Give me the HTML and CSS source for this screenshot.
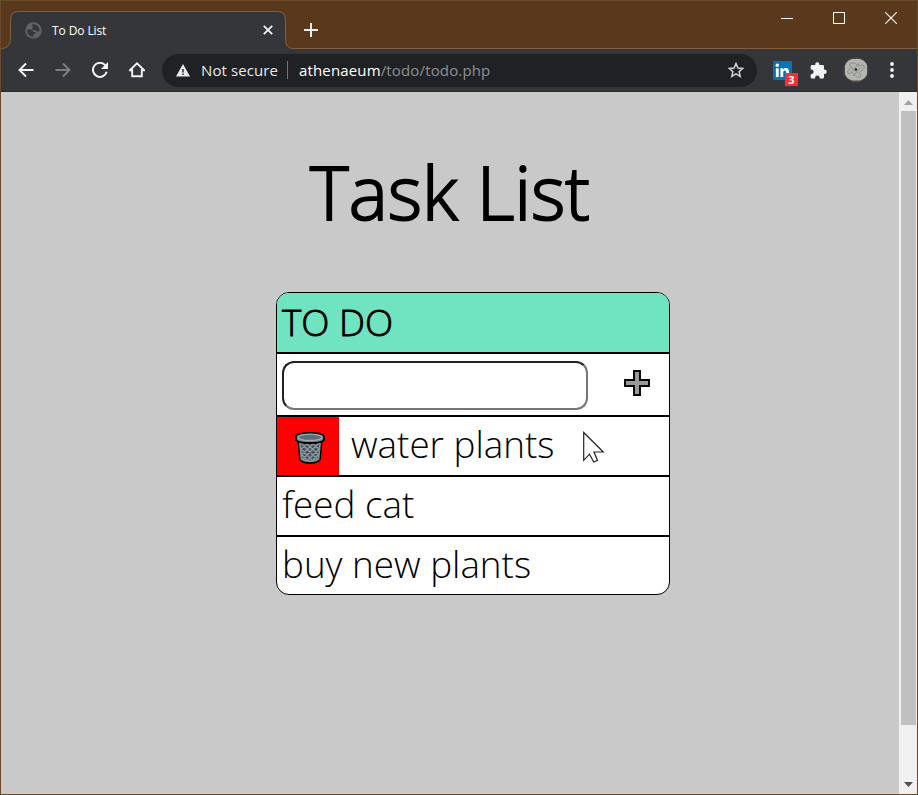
FILE: index.html
```
<!DOCTYPE html>
<html lang="en">
<head>
<meta charset="utf-8">
<title>To Do List</title>
<link rel="stylesheet" href="styles.css">
</head>
<body>
<div class="window">
  <header class="titlebar">
    <div class="tab">
      <svg class="tab-shape" width="292" height="40" viewBox="0 0 292 40"><path d="M0 39.500C6 39.500 9.500 36 9.500 29.500V10.500Q9.500 2.500 17.500 2.500H276.500Q284.500 2.500 284.500 10.500V30Q284.500 39.500 292 39.500V40H0Z" fill="#35363a"/><path d="M0 39.500C6 39.500 9.500 36 9.500 29.500V10.500Q9.500 2.500 17.500 2.500H276.500Q284.500 2.500 284.500 10.500V30Q284.500 39.500 292 39.500" fill="none" stroke="#80613f"/></svg>
      <svg class="globe" width="17" height="17" viewBox="0 0 17 17"><circle cx="8.500" cy="8.500" r="8.300" fill="#5f6368"/><path d="M2.200 7.500 5 7.600Q8 7.700 8.200 10H10.500V12H8.500V14.800A6.300 6.300 0 0 1 2.200 7.500ZM7.300 2.300A6.400 6.400 0 0 1 14.700 9L12.500 9.800 11 8.300 8 8 6.600 6.500 8.300 5.500 7.300 4Z" fill="#35363a"/></svg>
      <span class="tab-title">To Do List</span>
      <svg class="tab-close" width="10" height="10" viewBox="0 0 10 10"><path d="M.8.8 9.200 9.200M9.200.8.8 9.200" stroke="#f1f3f4" stroke-width="1.800"/></svg>
    </div>
    <svg class="new-tab" width="14" height="14" viewBox="0 0 14 14"><path d="M7 0V14M0 7H14" stroke="#e8eaed" stroke-width="2"/></svg>
    <div class="controls">
      <svg width="12" height="12" viewBox="0 0 12 12"><path d="M0 6.500H12" stroke="#fff"/></svg>
      <svg width="12" height="12" viewBox="0 0 12 12"><path d="M.5.5H11.500V11.500H.5Z" fill="none" stroke="#fff"/></svg>
      <svg width="12" height="12" viewBox="0 0 12 12"><path d="M.3.3 11.700 11.700M11.700.3.3 11.700" stroke="#fff" stroke-width="1.100"/></svg>
    </div>
  </header>
  <nav class="toolbar">
    <svg class="nav-icon" width="16" height="16" viewBox="0 0 16 16"><path d="M15.500 8H2M8 1.500 1.500 8 8 14.500" fill="none" stroke="#f1f3f4" stroke-width="1.900"/></svg>
    <svg class="nav-icon" width="16" height="16" viewBox="0 0 16 16"><path d="M.5 8H14M8 1.500 14.500 8 8 14.500" fill="none" stroke="#7d7e82" stroke-width="1.900"/></svg>
    <svg class="nav-icon" width="16" height="16" viewBox="0 0 16 16"><path d="M13.300 3.300A7 7 0 1 0 14.700 9.800" fill="none" stroke="#f1f3f4" stroke-width="2"/><path d="M16 0V7H9Z" fill="#f1f3f4"/></svg>
    <svg class="nav-icon" width="16" height="16" viewBox="0 0 16 16"><path d="M.8 8.300H3.200V14.200H12.800V8.300H15.200L8 1.400Z" fill="none" stroke="#f1f3f4" stroke-width="1.900"/></svg>
    <div class="omnibox">
      <svg class="warn" width="14" height="13" viewBox="0 0 14 13"><path d="M7 0 14 12.500H0Z" fill="#e8eaed"/><path d="M7 5V8.400M7 9.600V11" stroke="#202124" stroke-width="1.400"/></svg>
      <span class="secure">Not secure</span>
      <span class="divider"></span>
      <span class="url"><span class="host">athenaeum</span>/todo/todo.php</span>
      <svg class="star" width="16" height="16" viewBox="0 0 16 16"><path d="M8 1.500 9.900 6 14.800 6.400 11.100 9.600 12.200 14.400 8 11.800 3.800 14.400 4.900 9.600 1.200 6.400 6.100 6Z" fill="none" stroke="#d0d2d5" stroke-width="1.500"/></svg>
    </div>
    <div class="linkedin">
      <svg width="19" height="19" viewBox="0 0 19 19"><rect width="19" height="19" rx="1.200" fill="#0277b5"/><circle cx="4.300" cy="4.300" r="1.700" fill="#fff"/><path d="M2.900 7.200H5.700V16H2.900ZM7.400 7.200H10.100V8.400Q11 7 12.900 7 16 7 16 10.800V16H13.200V11.500Q13.200 9.400 11.700 9.400 10.200 9.400 10.200 11.500V16H7.400Z" fill="#fff"/></svg>
      <span class="badge">3</span>
    </div>
    <svg class="puzzle" width="17" height="17" viewBox="0 0 17 17"><path d="M2 3H5.200V2.300A2.100 2.100 0 0 1 9.400 2.300V3H12.800Q14 3 14 4.200V7.500H14.500A2.200 2.200 0 0 1 14.500 11.900H14V15.300Q14 16.500 12.800 16.500H9.700V15.800A2.300 2.300 0 0 0 5.100 15.800V16.500H2Q.7 16.500.7 15.300V12.200H1.300A2.300 2.300 0 0 0 1.300 7.500H.7V4.200Q.7 3 2 3Z" fill="#f1f3f4"/></svg>
    <svg class="avatar" width="26" height="26" viewBox="0 0 26 26"><circle cx="13" cy="13" r="12.500" fill="#51483f"/><path d="M9 2H17Q24 5 24 9V17Q23 21 17 23.500H9Q3 21 2 17V9Q3 4 9 2Z" fill="#b3b5b0"/><g fill="none" stroke="#8e918b"><path d="M6 8Q10 4 13 7T20 8Q23 11 19 13T18 19Q14 22 12 18T6 17Q3 14 7 12T6 8"/><path d="M9 15 16 6M10 19 18 10M8 10 15 16"/></g><circle cx="13" cy="12.500" r="1.200" fill="#222"/></svg>
    <svg class="menu" width="4" height="16" viewBox="0 0 4 16"><g fill="#f1f3f4"><circle cx="2" cy="2" r="1.900"/><circle cx="2" cy="8" r="1.900"/><circle cx="2" cy="14" r="1.900"/></g></svg>
  </nav>
  <div class="viewport">
    <main class="page">
      <h1>Task List</h1>
      <section class="list">
        <h2 class="row head"><span>TO DO</span></h2>
        <form class="row entry">
          <input type="text" aria-label="New task">
          <svg width="26" height="26" viewBox="0 0 26 26"><path d="M10 1H16V10H25V16H16V25H10V16H1V10H10Z" fill="#999" stroke="#000" stroke-width="1.900"/></svg>
        </form>
        <div class="row task active">
          <span class="trash">
            <svg width="30" height="32" viewBox="0 0 30 32"><path d="M3.300 8 5 27Q5.500 31 15 31T25 27L26.700 8Z" fill="#46515a" stroke="#000" stroke-width="1.800"/><path d="M6 11 22 27M11 11 24 23M17 11 25 18M6 17 18 29M7 23 12 28M24 11 8 27M19 11 6 23M13 11 5 18M24 17 12 29M23 23 18 28" stroke="#8d99a1" stroke-width="1.400"/><path d="M4.900 10 6.500 27Q15 31.500 23.500 27L25.100 10" fill="none" stroke="#84919a" stroke-width="1.800"/><path d="M1 4.500Q2 1 15 1T29 4.500V8Q27 11 15 11T1 8Z" fill="#75828b" stroke="#000" stroke-width="1.800"/><ellipse cx="15" cy="5.300" rx="12" ry="3.200" fill="#606c74" stroke="#a0acb3" stroke-width="1.300"/></svg>
          </span>
          <span>water plants</span>
          <svg class="cursor" width="22" height="32" viewBox="0 0 22 32"><path d="M.7 1.500V29.300L6.500 23.200 10.700 31 14.500 29.500 11 21H20.300Z" fill="#fff" stroke="#222" stroke-width="1.200"/></svg>
        </div>
        <div class="row task"><span>feed cat</span></div>
        <div class="row task last"><span>buy new plants</span></div>
      </section>
    </main>
    <aside class="scrollbar">
      <svg width="9" height="5" viewBox="0 0 9 5"><path d="M0 5 4.500 0 9 5Z" fill="#a3a3a3"/></svg>
      <div class="thumb"></div>
      <svg width="9" height="5" viewBox="0 0 9 5"><path d="M0 0 4.500 5 9 0Z" fill="#505050"/></svg>
    </aside>
  </div>
</div>
</body>
</html>
```
FILE: styles.css
```
* { box-sizing: border-box; }
body { margin: 0; width: 918px; height: 795px; overflow: hidden; font-family: "Open Sans", sans-serif; }
svg { display: block; flex: none; }
.window { width: 918px; height: 795px; border: 1px solid #6a4a2d; display: flex; flex-direction: column; background: #5a381b; }
.titlebar { height: 48px; flex: none; display: flex; align-items: flex-start; border-bottom: 1px solid #80613f; }
.tab { position: relative; width: 292px; height: 48px; display: flex; align-items: center; padding: 10px 0 0 24px; }
.tab-shape { position: absolute; left: 0; top: 8px; }
.globe, .tab-title, .tab-close { position: relative; }
.globe { margin-top: 1px; }
.tab-title { margin-left: 10px; width: 206px; font-size: 12px; line-height: 16px; letter-spacing: -.1px; color: #fff; margin-top: 1px; }
.tab-close { margin: 0 0 0 5px; }
.new-tab { margin: 22px 0 0 11px; }
.controls { margin: 11px 20px 0 auto; display: flex; gap: 40px; }
.toolbar { height: 43px; flex: none; display: flex; align-items: center; background: #35363a; border-bottom: 1px solid #28292c; padding-left: 17px; }
.nav-icon { margin-right: 21px; }
.nav-icon:nth-child(4) { margin-right: 17px; }
.omnibox { width: 595px; height: 33px; border-radius: 17px; background: #202124; display: flex; align-items: center; padding: 0 21px 0 14px; font-size: 15px; letter-spacing: .1px; color: #e8eaed; white-space: nowrap; }
.secure { margin-left: 11px; width: 78px; }
.divider { width: 1px; height: 18px; background: #73757a; margin: 0 11px 0 8px; }
.url { color: #8d9196; letter-spacing: .15px; }
.host { color: #fff; }
.star { margin-left: auto; margin-right: -8px; }
.linkedin { position: relative; margin-left: 16px; }
.badge { position: absolute; left: 12px; top: 12px; width: 13px; height: 13px; background: #fb2b35; color: #fff; font-size: 11px; font-weight: 700; line-height: 14px; text-align: center; }
.puzzle { margin-left: 18px; }
.avatar { margin-left: 16px; }
.menu { margin-left: 21px; }
.viewport { flex: 1; display: flex; background: #c9c9c9; min-height: 0; }
.page { width: 898px; flex: none; font-weight: 300; color: #000; }
h1 { margin: 48px 0 48px; text-align: center; font-size: 73.6px; line-height: 104px; font-weight: 300; -webkit-text-stroke: 2px #000; }
.list { width: 394px; height: 303px; margin-left: 275px; border: 1px solid #000; border-radius: 13px; background: #fff; overflow: hidden; font-size: 36.8px; line-height: 50px; }
.row { height: 60px; border-bottom: 2px solid #000; padding-left: 5px; display: flex; align-items: center; white-space: nowrap; }
.head { height: 61px; margin: 0; background: #70e4c1; font-size: inherit; font-weight: 300; -webkit-text-stroke: .8px #000; }
.head span { margin-bottom: 1px; }
.task > span:not(.trash) { margin-bottom: 5px; }
.task.last > span { margin-bottom: 7px; }
.entry { height: 63px; }
input { width: 306px; height: 49px; border: 2px inset #767676; border-radius: 12px; background: #fff; padding: 0; margin-top: 2px; }
.entry svg { margin: -4px 0 0 36px; }
.active { padding-left: 0; }
.trash { width: 62px; height: 58px; background: #f00; margin-right: 12px; display: flex; align-items: center; justify-content: center; padding: 4px 0 0 4px; }
.cursor { margin: 2px 0 0 29px; }
.last { border-bottom: 0; }
.scrollbar { width: 18px; flex: none; background: #f0f0f0; display: flex; flex-direction: column; align-items: center; padding: 8px 1px 7px; }
.thumb { width: 15px; height: 614px; margin: 6px 0 auto; background: #c0c0c0; }
```
